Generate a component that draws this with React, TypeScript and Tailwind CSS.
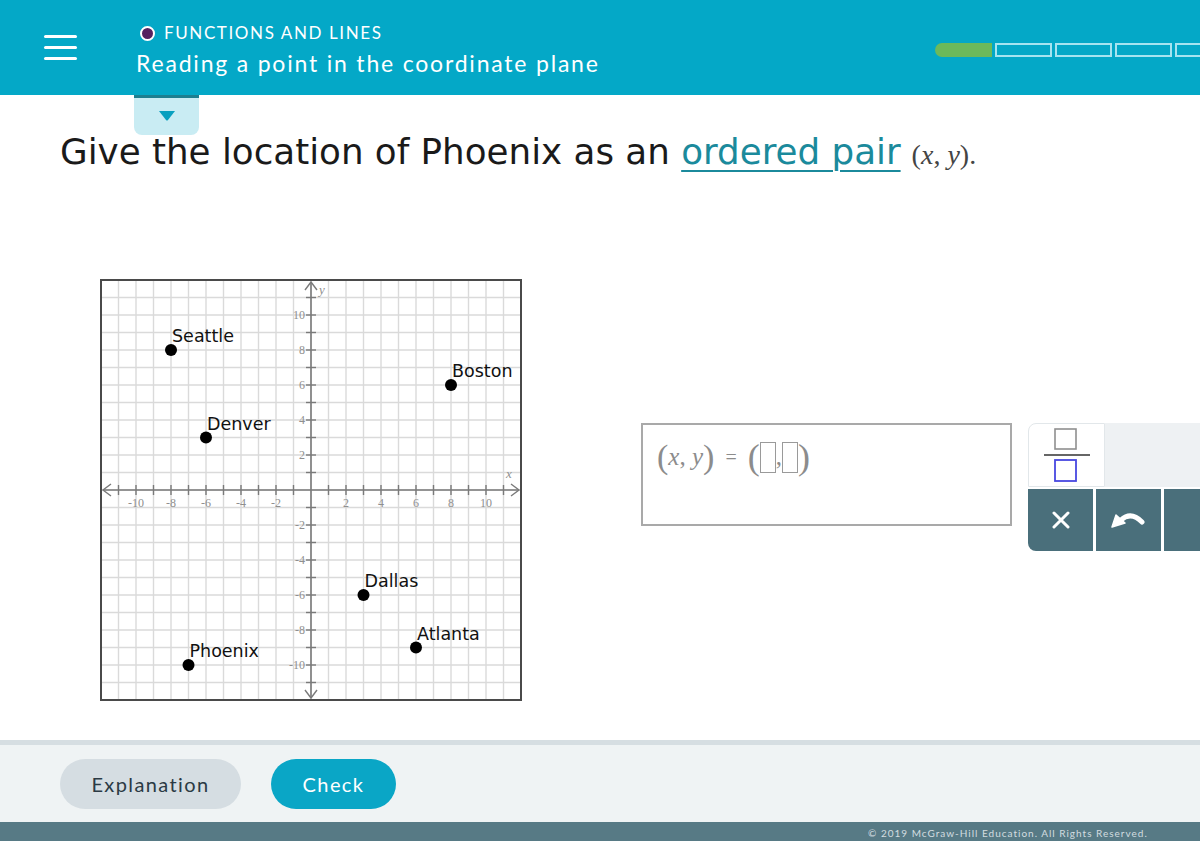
import React from 'react'

const U = 17.5
const O = 211

const cities = [
  { name: 'Seattle', x: -8, y: 8 },
  { name: 'Denver', x: -6, y: 3 },
  { name: 'Boston', x: 8, y: 6 },
  { name: 'Dallas', x: 3, y: -6 },
  { name: 'Atlanta', x: 6, y: -9 },
  { name: 'Phoenix', x: -7, y: -10 },
]

const range = (a: number, b: number) => Array.from({ length: b - a + 1 }, (_, i) => a + i)

function Graph() {
  const px = (v: number) => O + v * U
  const py = (v: number) => O - v * U
  const serif = '"Liberation Serif", "DejaVu Serif", serif'
  return (
    <svg width="422" height="422" viewBox="0 0 422 422" className="block">
      <rect x="0" y="0" width="422" height="422" fill="#fff" />
      {range(-12, 12).map((i) => (
        <g key={i}>
          <line x1={px(i)} y1="1" x2={px(i)} y2="421" stroke="#dadada" strokeWidth="1.4" />
          <line x1="1" y1={py(i)} x2="421" y2={py(i)} stroke="#dadada" strokeWidth="1.4" />
        </g>
      ))}
      {/* axes */}
      <line x1="3" y1={O} x2="419" y2={O} stroke="#7a7a7a" strokeWidth="1.6" />
      <line x1={O} y1="3" x2={O} y2="419" stroke="#7a7a7a" strokeWidth="1.6" />
      <path d={`M11 ${O - 6} L3 ${O} L11 ${O + 6}`} fill="none" stroke="#7a7a7a" strokeWidth="1.4" />
      <path d={`M411 ${O - 6} L419 ${O} L411 ${O + 6}`} fill="none" stroke="#7a7a7a" strokeWidth="1.4" />
      <path d={`M${O - 6} 11 L${O} 3 L${O + 6} 11`} fill="none" stroke="#7a7a7a" strokeWidth="1.4" />
      <path d={`M${O - 6} 411 L${O} 419 L${O + 6} 411`} fill="none" stroke="#7a7a7a" strokeWidth="1.4" />
      {range(-11, 11)
        .filter((i) => i !== 0)
        .map((i) => (
          <g key={i}>
            <line x1={px(i)} y1={O - 5} x2={px(i)} y2={O + 5} stroke="#7a7a7a" strokeWidth="1.4" />
            <line x1={O - 5} y1={py(i)} x2={O + 5} y2={py(i)} stroke="#7a7a7a" strokeWidth="1.4" />
          </g>
        ))}
      {[-10, -8, -6, -4, -2, 2, 4, 6, 8, 10].map((i) => (
        <g key={i} fontFamily={serif} fontSize="12" fill="#8f8f8f">
          <text x={px(i)} y={O + 17} textAnchor="middle">
            {i}
          </text>
          <text x={O - 6} y={py(i) + 4} textAnchor="end">
            {i}
          </text>
        </g>
      ))}
      <text x="406" y="199" fontFamily={serif} fontStyle="italic" fontSize="13" fill="#8f8f8f">
        x
      </text>
      <text x="219" y="15" fontFamily={serif} fontStyle="italic" fontSize="13" fill="#8f8f8f">
        y
      </text>
      {cities.map((c) => (
        <g key={c.name}>
          <circle cx={px(c.x)} cy={py(c.y)} r="6" fill="#000" />
          <text
            x={px(c.x) + 1}
            y={py(c.y) - 8}
            fontFamily='"DejaVu Sans", Verdana, sans-serif'
            fontSize="17.5"
            fill="#111"
          >
            {c.name}
          </text>
        </g>
      ))}
      <rect x="1" y="1" width="420" height="420" fill="none" stroke="#4a4a4a" strokeWidth="2" />
    </svg>
  )
}

function FractionKey() {
  return (
    <svg width="48" height="56" viewBox="0 0 48 56">
      <rect x="12" y="2" width="21" height="20" fill="none" stroke="#8f8f8f" strokeWidth="1.6" />
      <line x1="1" y1="28" x2="47" y2="28" stroke="#666" strokeWidth="2.2" />
      <rect x="12" y="33" width="21" height="21" fill="none" stroke="#4848e0" strokeWidth="1.8" />
    </svg>
  )
}

function UndoIcon() {
  return (
    <svg width="38" height="20" viewBox="0 0 38 20">
      <path d="M12 10 Q22 1 33 12" fill="none" stroke="#fff" strokeWidth="5" strokeLinecap="round" />
      <path d="M3 17 L7 5 L16 13 Z" fill="#fff" stroke="#fff" strokeWidth="1.5" strokeLinejoin="round" />
    </svg>
  )
}

function XIcon() {
  return (
    <svg width="18" height="18" viewBox="0 0 18 18">
      <path d="M2 2 L16 16 M16 2 L2 16" stroke="#fff" strokeWidth="3" strokeLinecap="round" />
    </svg>
  )
}

export default function App() {
  const lato = { fontFamily: 'Lato, "Open Sans", sans-serif' }
  const serif = { fontFamily: '"Liberation Serif", "DejaVu Serif", serif' }
  return (
    <div className="relative w-[1200px] h-[841px] overflow-hidden bg-white flex flex-col" style={lato}>
      <header className="h-[95px] shrink-0 bg-[#04a8c7] flex items-center text-white">
        <div className="ml-[44px] w-[33px] flex flex-col gap-[8px]">
          <span className="h-[3px] bg-white rounded-sm" />
          <span className="h-[3px] bg-white rounded-sm" />
          <span className="h-[3px] bg-white rounded-sm" />
        </div>
        <div className="ml-[59px] self-start mt-[23px] flex flex-col">
          <div className="flex items-center gap-[9px] ml-[4px]">
            <span className="w-[15px] h-[15px] rounded-full bg-[#55215f] border-2 border-white" />
            <span className="text-[17px] tracking-[1.6px] leading-[20px]">FUNCTIONS AND LINES</span>
          </div>
          <div className="text-[23px] tracking-[1.8px] leading-[28px] mt-[6px]">
            Reading a point in the coordinate plane
          </div>
        </div>
        <div className="ml-auto mr-[-32px] mt-[5px] flex gap-[3px]">
          <span className="w-[57px] h-[14px] rounded-l-full bg-[#6cb95b]" />
          <span className="w-[57px] h-[14px] border-2 border-[#a6e4f0]" />
          <span className="w-[57px] h-[14px] border-2 border-[#a6e4f0]" />
          <span className="w-[57px] h-[14px] border-2 border-[#a6e4f0]" />
          <span className="w-[57px] h-[14px] border-2 border-[#a6e4f0]" />
        </div>
      </header>

      <div className="absolute left-[134px] top-[95px] w-[65px] h-[40px] bg-[#c9ecf3] rounded-b-[8px] border-t-[3px] border-[#1d7f90] flex justify-center pt-[12px]">
        <svg width="18" height="11" viewBox="0 0 18 11">
          <path d="M1 1 L17 1 L10 10 Q9 11 8 10 Z" fill="#08a0bf" />
        </svg>
      </div>

      <main className="flex-1 flex flex-col">
        <div
          className="ml-[60px] mt-[33px] text-[35.7px] leading-[48px] text-[#1a1a1a] flex items-baseline"
          style={{ fontFamily: '"DejaVu Sans", Verdana, sans-serif' }}
        >
          <span>Give the location of Phoenix as an&nbsp;</span>
          <span className="text-[#1b8a9c] underline decoration-2 underline-offset-[6px]">ordered pair</span>
          <span className="ml-[11px] text-[28px] text-[#444]" style={serif}>
            (<i>x</i>, <i>y</i>).
          </span>
        </div>

        <div className="flex items-start mt-[100px]">
          <div className="ml-[100px]">
            <Graph />
          </div>
          <div className="ml-[119px] mt-[144px] flex items-start">
            <div className="w-[371px] h-[103px] border-2 border-[#a9a9a9] pl-[14px] pt-[14px]">
              <div className="flex items-center text-[#8c8c8c] text-[25px] h-[36px]" style={serif}>
                <span className="text-[34px] leading-none">(</span>
                <i>x</i>
                <span>,&nbsp;</span>
                <i>y</i>
                <span className="text-[34px] leading-none">)</span>
                <span className="mx-[11px] text-[20px]">=</span>
                <span className="text-[36px] leading-none">(</span>
                <span className="w-[16px] h-[31px] border-[1.5px] border-[#9a9a9a]" />
                <span className="self-end">,</span>
                <span className="w-[16px] h-[31px] border-[1.5px] border-[#9a9a9a]" />
                <span className="text-[36px] leading-none">)</span>
              </div>
            </div>
            <div className="ml-[16px] w-[200px] flex flex-col gap-[2px]">
              <div className="flex h-[64px]">
                <div className="w-[77px] bg-white border border-[#e2e7ea] rounded-tl-[8px] flex items-center justify-center">
                  <FractionKey />
                </div>
                <div className="flex-1 bg-[#eef1f3]" />
              </div>
              <div className="flex h-[62px] gap-[3px]">
                <div className="w-[77px] bg-[#4a6f7b] rounded-bl-[8px] flex items-center justify-center">
                  <XIcon />
                </div>
                <div className="w-[76px] bg-[#4a6f7b] flex items-center justify-center">
                  <UndoIcon />
                </div>
                <div className="w-[76px] bg-[#4a6f7b]" />
              </div>
            </div>
          </div>
        </div>
      </main>

      <footer className="shrink-0">
        <div className="h-[5px] bg-[#d6dee2]" />
        <div className="h-[77px] bg-[#eff3f4] flex items-center gap-[30px] pl-[60px]">
          <button className="w-[181px] h-[50px] rounded-full bg-[#d5dde2] text-[#2b3a44] text-[20px] tracking-[1.4px]">
            Explanation
          </button>
          <button className="w-[125px] h-[50px] rounded-full bg-[#0aa6c6] text-white text-[20px] tracking-[1.4px]">
            Check
          </button>
        </div>
        <div className="h-[19px] bg-[#577a85] overflow-hidden pl-[868px] pt-[5px]">
          <div className="text-[10px] leading-[12px] text-[#d3dde0] whitespace-nowrap tracking-[1px]">
            © 2019 McGraw-Hill Education. All Rights Reserved.
          </div>
        </div>
      </footer>
    </div>
  )
}
